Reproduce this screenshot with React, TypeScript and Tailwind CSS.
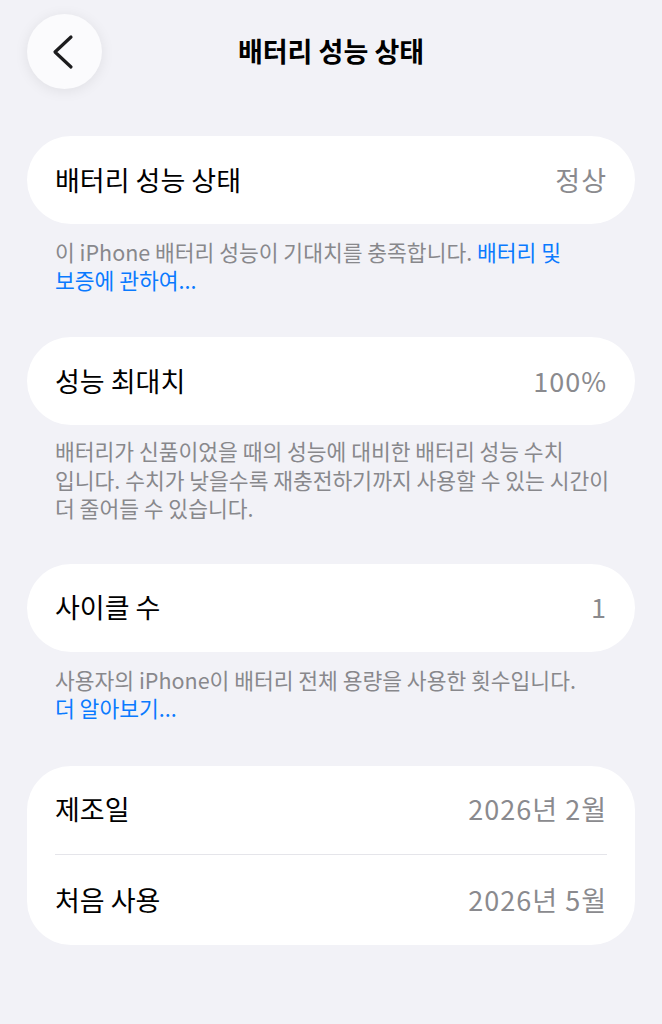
const font = {
  fontFamily: '"Noto Sans CJK KR", "Noto Sans", sans-serif',
};

function Row({ label, value }: { label: string; value: string }) {
  return (
    <div className="flex h-[88px] items-center justify-between">
      <span className="text-[27px] text-black">{label}</span>
      <span className="text-[27px] tracking-[1px] text-[#8a8a8e]">{value}</span>
    </div>
  );
}

function BackChevron() {
  return (
    <svg width="24" height="36" viewBox="0 0 24 36" fill="none" className="-ml-[3px]">
      <polyline
        points="20,3 4,18 20,33"
        stroke="#1c1c1e"
        strokeWidth="3.2"
        strokeLinecap="round"
        strokeLinejoin="round"
      />
    </svg>
  );
}

export default function App() {
  return (
    <div className="min-h-[1024px] w-full bg-[#f2f2f7]" style={font}>
      <header className="grid grid-cols-[75px_1fr_75px] items-center px-[27px] pt-[14px]">
        <button className="flex h-[75px] w-[75px] items-center justify-center rounded-full bg-[#fbfbfd] shadow-[0_2px_14px_rgba(0,0,0,0.08)]">
          <BackChevron />
        </button>
        <h1 className="text-center text-[27px] font-bold text-black">배터리 성능 상태</h1>
        <div />
      </header>

      <main className="px-[27px] pt-[47px]">
        <section className="rounded-full bg-white px-[28px]">
          <Row label="배터리 성능 상태" value="정상" />
        </section>
        <p className="whitespace-nowrap px-[28px] pt-[14px] pb-[43px] text-[21.5px] leading-[28px] text-[#88888c]">
          이 iPhone 배터리 성능이 기대치를 충족합니다.{" "}
          <span className="text-[#0a7aff]">배터리 및</span>
          <br />
          <span className="text-[#0a7aff]">보증에 관하여...</span>
        </p>

        <section className="rounded-full bg-white px-[28px]">
          <Row label="성능 최대치" value="100%" />
        </section>
        <p className="whitespace-nowrap px-[28px] pt-[12px] pb-[41px] text-[21.5px] leading-[28.5px] text-[#88888c]">
          배터리가 신품이었을 때의 성능에 대비한 배터리 성능 수치
          <br />
          입니다. 수치가 낮을수록 재충전하기까지 사용할 수 있는 시간이
          <br />
          더 줄어들 수 있습니다.
        </p>

        <section className="rounded-full bg-white px-[28px]">
          <Row label="사이클 수" value="1" />
        </section>
        <p className="whitespace-nowrap px-[28px] pt-[14px] pb-[44px] text-[21.5px] leading-[28px] text-[#88888c]">
          사용자의 iPhone이 배터리 전체 용량을 사용한 횟수입니다.
          <br />
          <span className="text-[#0a7aff]">더 알아보기...</span>
        </p>

        <section className="rounded-[44px] bg-white px-[28px]">
          <div className="border-b border-[#e5e5ea]">
            <Row label="제조일" value="2026년 2월" />
          </div>
          <div className="h-[2px]" />
          <Row label="처음 사용" value="2026년 5월" />
        </section>
      </main>
    </div>
  );
}
